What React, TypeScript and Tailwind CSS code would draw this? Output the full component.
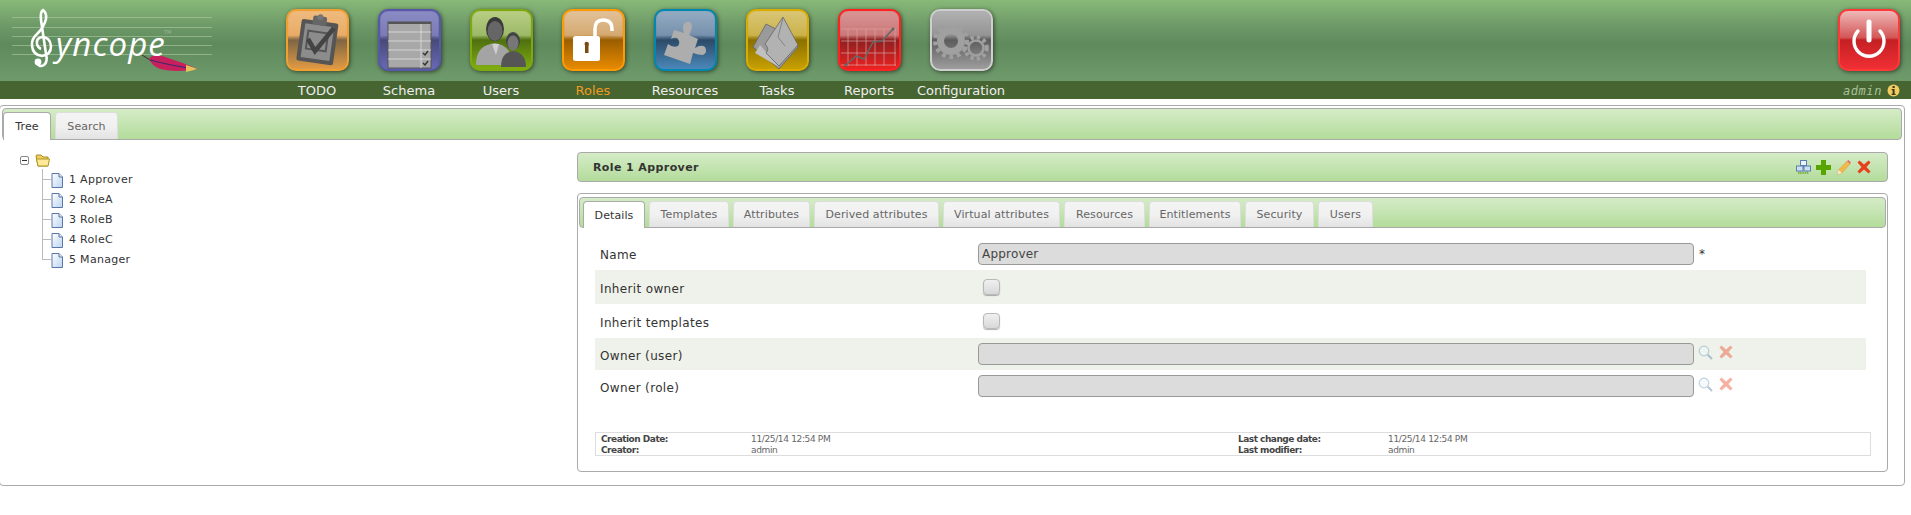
import React from "react";

const F = "[font-family:'DejaVu_Sans',sans-serif]";

function Glossy({ id, border, a, b, c, d, gloss = 0.28, children }: { id: string; border: string; a: string; b: string; c: string; d: string; gloss?: number; children?: React.ReactNode }) {
  return (
    <svg width="63" height="62" viewBox="0 0 63 62" className="block drop-shadow-[1px_1px_2px_rgba(0,0,0,0.55)]">
      <defs>
        <linearGradient id={id} x1="0" y1="0" x2="0" y2="1">
          <stop offset="0" stopColor={a} />
          <stop offset="0.42" stopColor={b} />
          <stop offset="0.5" stopColor={c} />
          <stop offset="1" stopColor={d} />
        </linearGradient>
      </defs>
      <rect x="1" y="1" width="61" height="60" rx="9" fill={`url(#${id})`} stroke={border} strokeWidth="2" />
      <path d="M3 28 Q31 24 60 28 L60 11 Q60 3 52 3 L11 3 Q3 3 3 11 Z" fill="#fff" opacity={gloss} />
      {children}
    </svg>
  );
}

const Todo = () => (
  <Glossy id="g1" border="#f0a030" a="#efb878" b="#e8a860" c="#7d6644" d="#e59c44" gloss={0.05}>
    <g transform="rotate(8 31 32)">
      <rect x="13" y="12" width="37" height="42" rx="2" fill="#555" />
      <rect x="17" y="16" width="29" height="34" fill="#8c8c8c" />
      <rect x="21" y="23" width="20" height="18" fill="none" stroke="#555" strokeWidth="2" />
      <rect x="24" y="7" width="14" height="9" rx="2" fill="#666" />
      <circle cx="31" cy="8" r="3" fill="#777" />
    </g>
    <path d="M22 30 L29 42 L48 19" fill="none" stroke="#444" strokeWidth="4.5" />
  </Glossy>
);
const Schema = () => (
  <Glossy id="g2" border="#5858a8" a="#8282c0" b="#7070b0" c="#474a78" d="#6a6ab8" gloss={0.08}>
    <rect x="10" y="13" width="43" height="46" fill="#a8a8a8" stroke="#555" strokeWidth="1" />
    <rect x="10" y="13" width="43" height="2" fill="#555" />
    {[23, 32, 41, 50].map((y) => <path key={y} d={`M10 ${y} H53`} stroke="#e0e0e0" strokeWidth="0.8" />)}
    <path d="M43 15 V59" stroke="#e0e0e0" strokeWidth="0.8" />
    <path d="M45 44 l2 2 l3 -4 M45 54 l2 2 l3 -4" stroke="#333" strokeWidth="1.4" fill="none" />
  </Glossy>
);
const Users = () => (
  <Glossy id="g3" border="#7fa810" a="#b4cc7c" b="#94b45c" c="#4f7010" d="#80b010" gloss={0.08}>
    <ellipse cx="25" cy="20" rx="9" ry="12" fill="#3a3a3a" />
    <ellipse cx="25" cy="22" rx="7.5" ry="10" fill="#666" />
    <path d="M6 56 C6 40 14 36 25 34 C36 36 42 42 42 56 Z" fill="#a4a4a4" />
    <path d="M22 35 L26 46 L29 35 Z" fill="#d0d0d0" />
    <ellipse cx="43" cy="32" rx="7" ry="9" fill="#444" />
    <ellipse cx="43" cy="34" rx="5.5" ry="7.5" fill="#777" />
    <path d="M31 58 C31 47 36 43 43 42 C51 43 56 48 56 58 Z" fill="#555" />
  </Glossy>
);
const Roles = () => (
  <Glossy id="g4" border="#ff9a00" a="#e0bc90" b="#d0a060" c="#9a5e00" d="#ea8c00" gloss={0.1}>
    <path d="M33 27 V20 Q33 11 41 11 Q50 11 50 20 V22" fill="none" stroke="#fff" strokeWidth="3.5" />
    <rect x="11" y="27" width="27" height="25" rx="2.5" fill="#fff" />
    <rect x="23" y="35" width="3.5" height="9" fill="#7a4a10" />
    <circle cx="24.7" cy="35" r="2.2" fill="#7a4a10" />
  </Glossy>
);
const Resources = () => (
  <Glossy id="g5" border="#0088b0" a="#8fa9c0" b="#6f8aa8" c="#2c4a68" d="#4b8abc" gloss={0.06}>
    <path d="M20 21 L30 24 Q27 16 32 13 Q38 12 38 18 Q37 23 35 26 L44 30 L41 39 Q47 35 51 38 Q54 43 49 46 Q44 46 39 44 L36 55 L10 46 L14 35 Q19 39 24 37 Q27 33 23 29 Q20 28 17 30 Z" fill="#adadad" />
  </Glossy>
);
const Tasks = () => (
  <Glossy id="g6" border="#dcab00" a="#d8c470" b="#c8ae40" c="#8a7000" d="#caa200" gloss={0.06}>
    <path d="M7 38 L20 15 L34 22 L52 38 L33 60 Z" fill="#9a9a9a" stroke="#666" strokeWidth="0.8" />
    <path d="M9 44 L14 36 L33 58 Z" fill="#c0c0c0" />
    <path d="M19 35 L37 8 L52 36 L33 57 L20 44 Q24 40 19 35 Z" fill="#b2b2b2" stroke="#666" strokeWidth="0.8" />
    <path d="M37 9 L32 28 L39 37" fill="none" stroke="#777" strokeWidth="0.8" />
  </Glossy>
);
const Reports = () => (
  <Glossy id="g7" border="#ff2222" a="#d89090" b="#c87070" c="#8c2020" d="#f02222" gloss={0.06}>
    {[21, 33, 45, 57].map((y) => <path key={y} d={`M3 ${y - 1} H58`} stroke="#e0a0a0" strokeWidth="0.7" />)}
    {[10, 19, 28, 37, 46, 57].map((x) => <path key={x} d={`M${x} 20 V57`} stroke="#e0a0a0" strokeWidth="0.7" />)}
    <path d="M8 56 L18 47 L26 50 L35 33 L44 32 L55 20" fill="none" stroke="#666" strokeWidth="1.6" />
    <circle cx="8" cy="56" r="1.6" fill="#666" /><circle cx="55" cy="20" r="1.6" fill="#666" />
  </Glossy>
);
const Gear = ({ cx, cy, r, w, t }: { cx: number; cy: number; r: number; w: number; t: number }) => (
  <g>
    <circle cx={cx} cy={cy} r={r} fill="none" stroke="#a0a0a0" strokeWidth={w} />
    <circle cx={cx} cy={cy} r={r + w / 2 + 2} fill="none" stroke="#a0a0a0" strokeWidth={4} strokeDasharray={t} />
  </g>
);
const Config = () => (
  <Glossy id="g8" border="#cfcfcf" a="#b0b0b0" b="#909090" c="#5c5c5c" d="#a0a0a0" gloss={0.04}>
    <Gear cx={21} cy={32} r={10.5} w={7} t={3.8} />
    <Gear cx={46} cy={39} r={7.5} w={2.5} t={3.2} />
  </Glossy>
);
const Power = () => (
  <svg width="62" height="62" viewBox="0 0 62 62" className="block drop-shadow-[1px_1px_2px_rgba(0,0,0,0.55)]">
    <defs>
      <linearGradient id="g9" x1="0" y1="0" x2="0" y2="1">
        <stop offset="0" stopColor="#f0bcbc" />
        <stop offset="0.46" stopColor="#d45656" />
        <stop offset="0.5" stopColor="#c42024" />
        <stop offset="1" stopColor="#f23034" />
      </linearGradient>
    </defs>
    <rect x="1" y="1" width="60" height="60" rx="9" fill="url(#g9)" stroke="#ff3838" strokeWidth="2" />
    <path d="M20 22 A15 15 0 1 0 42 22" fill="none" stroke="#fff" strokeWidth="3.4" strokeLinecap="round" />
    <path d="M31 13 V31" stroke="#fff" strokeWidth="5" strokeLinecap="round" />
  </svg>
);

const Logo = () => (
  <div className="relative w-[212px] h-[81px] shrink-0">
    <svg width="212" height="81" className="absolute left-0 top-0">
      {[17, 27, 36, 45, 54].map((y) => <path key={y} d={`M12 ${y}.5 H212`} stroke="#b6d0ad" strokeOpacity="0.55" />)}
      <path d="M36 62 Q39 68 44 65 Q48 62 46 54 L41 20 Q40 12 43 10 Q47 13 46 19 Q44 27 38 33 Q31 39 32 46 Q33 55 42 56 Q51 55 51 46 Q50 37 42 37 Q36 38 37 44 Q38 48 41 49" fill="none" stroke="#fff" strokeWidth="2.6" />
      <circle cx="38" cy="62" r="3.4" fill="#fff" />
      <path d="M142 55 L150 60" stroke="#333" strokeWidth="1" />
      <path d="M149 59 Q153 52 168 58 Q184 63 198 69 Q176 73 160 69 Q152 66 149 59 Z" fill="#c8205c" />
      <path d="M150 60 Q172 66 197 69" stroke="#3a2a70" strokeWidth="1.2" fill="none" />
      <path d="M186 65 L198 69 L186 72 Z" fill="#e4c35c" />
    </svg>
    <span className="absolute left-[56px] top-[26px] text-[33px] leading-[36px] italic text-white [font-family:'Open_Sans',sans-serif] tracking-[1.1px]">yncope</span>
    <span className="absolute left-[164px] top-[29px] text-[5px] leading-[7px] text-[#a0b898] [font-family:'DejaVu_Sans',sans-serif]">TM</span>
  </div>
);

const nav = [
  { l: "TODO", I: Todo },
  { l: "Schema", I: Schema },
  { l: "Users", I: Users },
  { l: "Roles", I: Roles },
  { l: "Resources", I: Resources },
  { l: "Tasks", I: Tasks },
  { l: "Reports", I: Reports },
  { l: "Configuration", I: Config },
];

const MinusBox = () => (
  <svg width="9" height="9" viewBox="0 0 9 9" className="block"><rect x="0.5" y="0.5" width="8" height="8" rx="1.5" fill="#fff" stroke="#888" /><path d="M2 4.5 H7" stroke="#333" /></svg>
);
const Folder = () => (
  <svg width="16" height="13" viewBox="0 0 16 13" className="block">
    <path d="M1 2 Q1 1 2 1 H6 L8 3 H13 V11 Q13 12 12 12 H3 Z" fill="#f0cf60" stroke="#a98a20" />
    <path d="M1.5 5 H14.5 L13 12 H3 Z" fill="#ffe999" stroke="#b09424" />
  </svg>
);
const FileIcon = () => (
  <svg width="12" height="15" viewBox="0 0 12 15" className="block">
    <defs><linearGradient id="fg" x1="0" y1="0" x2="1" y2="1"><stop offset="0" stopColor="#fff" /><stop offset="1" stopColor="#bcd4f0" /></linearGradient></defs>
    <path d="M1 .5 H8 L11.5 4 V14.5 H1 Z" fill="url(#fg)" stroke="#5a76a8" />
    <path d="M8 .5 V4 H11.5" fill="#dce8f8" stroke="#5a76a8" />
  </svg>
);
const NetworkIcon = () => (
  <svg width="15" height="15" viewBox="0 0 15 15" className="block">
    <path d="M2 13 H13" stroke="#7fb548" strokeWidth="2" strokeDasharray="1.5 .7" />
    <path d="M7.5 5 V8 M4 8 V12 M11 8 V12" stroke="#6c8ab0" />
    <rect x="4.5" y="0.5" width="6" height="5" fill="#eaf2fc" stroke="#5b7fb0" />
    <rect x="0.5" y="6" width="6.5" height="5" fill="#cfe0f4" stroke="#5b7fb0" />
    <rect x="8" y="6" width="6.5" height="5" fill="#cfe0f4" stroke="#5b7fb0" />
  </svg>
);
const PlusIcon = () => (
  <svg width="15" height="15" viewBox="0 0 15 15" className="block"><path d="M5 0 H10 V5 H15 V10 H10 V15 H5 V10 H0 V5 H5 Z" fill="#58a400" /></svg>
);
const PencilIcon = () => (
  <svg width="14" height="15" viewBox="0 0 14 15" className="block">
    <path d="M0.5 14.5 L1.5 10 L10 1 L13 4 L5 13 Z" fill="#f2b84a" stroke="#d79a3a" strokeWidth="0.5" />
    <path d="M10 1 L11.5 0 L14 2.5 L13 4 Z" fill="#e96a7e" />
    <path d="M0.5 14.5 L1.5 10 L5 13 Z" fill="#f8ecd2" />
  </svg>
);
const XIcon = ({ op = "" }: { op?: string }) => (
  <svg width="14" height="14" viewBox="0 0 14 14" className={`block ${op}`}><path d="M0.5 2.5 L2.5 0.5 L7 4.5 L11.5 0.5 L13.5 2.5 L9.5 7 L13.5 11.5 L11.5 13.5 L7 9.5 L2.5 13.5 L0.5 11.5 L4.5 7 Z" fill="#e8401c" /></svg>
);
const SearchIcon = () => (
  <svg width="15" height="15" viewBox="0 0 15 15" className="block opacity-50">
    <circle cx="6" cy="6" r="4.8" fill="#eef6fb" stroke="#7fa9c4" strokeWidth="1.2" />
    <path d="M9.8 9.8 L14 14" stroke="#6c8ea8" strokeWidth="2" />
  </svg>
);
const InfoIcon = () => (
  <svg width="13" height="13" viewBox="0 0 13 13" className="block">
    <circle cx="6.5" cy="6.5" r="6" fill="#f1cc60" />
    <rect x="5.5" y="2" width="2.2" height="2" fill="#3d3a20" />
    <path d="M4.6 5 H7.6 V9.8 H8.6 V11 H4.6 V9.8 H5.6 V6.2 H4.6 Z" fill="#3d3a20" />
  </svg>
);

const Tab = ({ label, active, w, big }: { label: string; active?: boolean; w: string; big?: boolean }) => (
  <div className={`${w} ${active ? (big ? "h-[28px]" : "h-[27px]") : big ? "h-[27px]" : "h-[26px]"} shrink-0 flex items-center justify-center pt-[2px] rounded-t-[4px] border border-b-0 text-[11px] tracking-[0.1px] ${active ? "bg-white border-[#aaaaaa] text-[#333333] -mb-px" : "bg-[linear-gradient(180deg,#f4f4f4_0%,#f0f0f0_55%,#e2e2e2_100%)] border-[#dddddd] text-[#666666]"}`}>
    {label}
  </div>
);

const tabBar = "border border-[#aaaaaa] rounded-[4px] bg-[linear-gradient(180deg,#d5ecc7_0%,#b3dc9b_100%)] flex items-end";

const Field = () => (
  <div className="w-[716px] h-[22px] shrink-0 bg-[#dcdcdc] border border-[#999999] rounded-[4px]" />
);
const Check = () => (
  <div className="ml-[5px] w-[17px] h-[16px] rounded-[4px] bg-[linear-gradient(180deg,#f0f0f0,#d8d8d8)] border border-[#b8b8b8] shadow-[0_1px_1px_rgba(0,0,0,0.3)]" />
);
const Label = ({ t }: { t: string }) => (
  <div className="w-[383px] pl-[5px] pt-[3px] shrink-0 text-[12px] tracking-[0.35px] text-[#333333]">{t}</div>
);

export default function App() {
  return (
    <div className={`w-[1911px] h-[515px] bg-white overflow-hidden ${F}`}>
      <div className="h-[81px] flex bg-[linear-gradient(180deg,#88b978_0%,#6b9666_35%,#5f8a5b_55%,#6f9a6c_100%)]">
        <Logo />
        <div className="flex ml-[59px] h-full">
          {nav.map(({ l, I }) => (
            <div key={l} className="w-[92px] pt-[9px] flex justify-center"><I /></div>
          ))}
        </div>
        <div className="ml-auto pt-[9px] pr-[11px]"><Power /></div>
      </div>
      <div className="h-[18px] flex items-center bg-[#466530] text-[13px] text-[#eeeeee]">
        <div className="flex ml-[271px] pt-[2px]">
          {nav.map(({ l }) => (
            <div key={l} className={`w-[92px] text-center whitespace-nowrap ${l === "Roles" ? "text-[#f09a20]" : ""}`}>{l}</div>
          ))}
        </div>
        <div className="ml-auto flex items-center pr-[11px] pt-[1px]">
          <span className="[font-family:'DejaVu_Sans_Mono',monospace] italic text-[12px] tracking-[0.6px] text-[#a9c29b]">admin</span>
          <span className="ml-[5px]"><InfoIcon /></span>
        </div>
      </div>

      <div className="mt-[6px] -ml-px w-[1906px] h-[381px] border border-[#aaaaaa] rounded-[4px] pt-[2px] pr-[2px] pl-[2px]">
        <div className={`${tabBar} h-[32px] gap-[4px]`}>
          <Tab label="Tree" active big w="w-[48px]" />
          <Tab label="Search" big w="w-[63px]" />
        </div>
        <div className="flex">
          <div className="w-[575px] shrink-0 pt-[14px] pl-[18px] text-[11px] tracking-[0.3px] text-[#333333]">
            <div className="flex items-center gap-[6px]">
              <MinusBox />
              <Folder />
            </div>
            <div className="relative pl-[31px] mt-[3px] flex flex-col">
              <div className="absolute left-[22px] top-[-1px] h-[91px] w-[10px] border-l border-[#bbbbbb]" />
              {["1 Approver", "2 RoleA", "3 RoleB", "4 RoleC", "5 Manager"].map((t) => (
                <div key={t} className="relative h-[20px] flex items-center gap-[6px]">
                  <div className="absolute left-[-9px] top-[9px] w-[9px] border-t border-[#bbbbbb]" />
                  <FileIcon />
                  <span className="pt-px">{t}</span>
                </div>
              ))}
            </div>
          </div>
          <div className="w-[1311px] shrink-0 pt-[12px]">
            <div className="h-[30px] border border-[#aaaaaa] rounded-[4px] bg-[linear-gradient(180deg,#d5ecc7_0%,#b3dc9b_100%)] flex items-center pl-[15px] pr-[16px]">
              <span className="font-bold text-[11px] tracking-[0.4px] text-[#333333] pt-[2px]">Role 1 Approver</span>
              <div className="ml-auto flex items-center">
                <NetworkIcon />
                <span className="ml-[5px]"><PlusIcon /></span>
                <span className="ml-[6px]"><PencilIcon /></span>
                <span className="ml-[6px]"><XIcon /></span>
              </div>
            </div>
            <div className="mt-[11px] h-[279px] border border-[#aaaaaa] rounded-[4px] pt-[3px] px-[1px]">
              <div className={`${tabBar} h-[31px] pl-[3px] gap-[4px]`}>
                <Tab label="Details" active w="w-[62px]" />
                <Tab label="Templates" w="w-[80px]" />
                <Tab label="Attributes" w="w-[77px]" />
                <Tab label="Derived attributes" w="w-[125px]" />
                <Tab label="Virtual attributes" w="w-[117px]" />
                <Tab label="Resources" w="w-[81px]" />
                <Tab label="Entitlements" w="w-[92px]" />
                <Tab label="Security" w="w-[69px]" />
                <Tab label="Users" w="w-[55px]" />
              </div>
              <div className="pl-[16px] pr-[15px] pt-[9px]">
                <div className="h-[33px] w-[1271px] flex items-center">
                  <Label t="Name" />
                  <div className="w-[716px] h-[22px] shrink-0 bg-[#dcdcdc] border border-[#999999] rounded-[4px] text-[12px] leading-[20px] px-[3px] text-[#444444] tracking-[0.2px]">Approver</div>
                  <span className="ml-[5px] text-[12px] text-[#333333]">*</span>
                </div>
                <div className="h-[34px] w-[1271px] flex items-center bg-[#eff2ea]"><Label t="Inherit owner" /><Check /></div>
                <div className="h-[34px] w-[1271px] flex items-center"><Label t="Inherit templates" /><Check /></div>
                <div className="h-[32px] w-[1271px] flex items-center bg-[#eff2ea]">
                  <Label t="Owner (user)" /><Field />
                  <span className="ml-[4px] -mt-[4px]"><SearchIcon /></span>
                  <span className="ml-[6px] -mt-[4px]"><XIcon op="opacity-40" /></span>
                </div>
                <div className="h-[32px] w-[1271px] flex items-center">
                  <Label t="Owner (role)" /><Field />
                  <span className="ml-[4px] -mt-[4px]"><SearchIcon /></span>
                  <span className="ml-[6px] -mt-[4px]"><XIcon op="opacity-40" /></span>
                </div>
                <div className="mt-[30px] w-[1276px] h-[24px] border border-[#dddddd] grid grid-cols-[150px_487px_150px_1fr] pl-[5px] pt-[1px] text-[9px] leading-[11px] text-[#666666] tracking-[-0.35px] content-center">
                  <b className="text-[#444444] tracking-[-0.5px]">Creation Date:</b><span>11/25/14 12:54 PM</span><b className="text-[#444444] tracking-[-0.5px]">Last change date:</b><span>11/25/14 12:54 PM</span>
                  <b className="text-[#444444] tracking-[-0.5px]">Creator:</b><span>admin</span><b className="text-[#444444] tracking-[-0.5px]">Last modifier:</b><span>admin</span>
                </div>
              </div>
            </div>
          </div>
        </div>
      </div>
    </div>
  );
}
